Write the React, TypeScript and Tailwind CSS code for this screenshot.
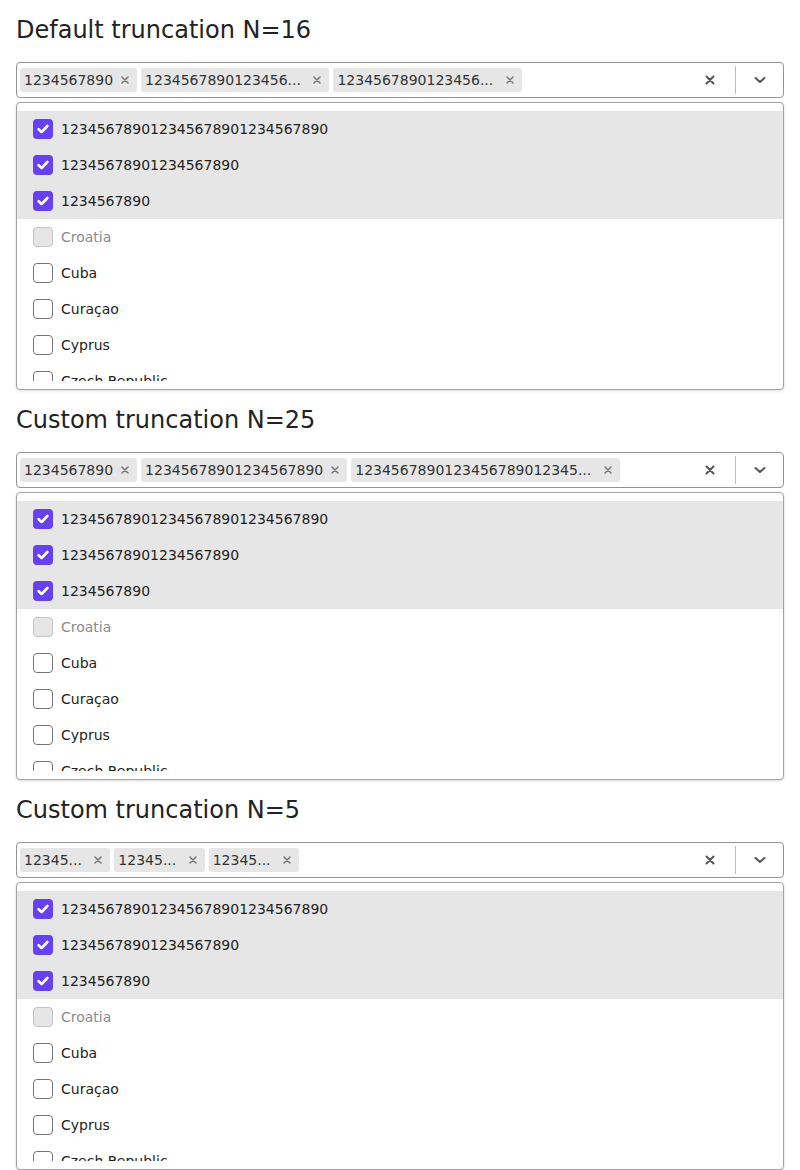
import React from 'react';

const FULL = ['123456789012345678901234567890', '12345678901234567890', '1234567890'];

const truncate = (s: string, n: number) => (s.length > n ? s.slice(0, n) + '... ' : s);

const options = [
  { label: FULL[0], checked: true },
  { label: FULL[1], checked: true },
  { label: FULL[2], checked: true },
  { label: 'Croatia', disabled: true },
  { label: 'Cuba' },
  { label: 'Curaçao' },
  { label: 'Cyprus' },
  { label: 'Czech Republic' },
  { label: 'Denmark' },
];

const Checkbox = ({ checked, disabled }: { checked?: boolean; disabled?: boolean }) => {
  if (checked) {
    return (
      <span className="w-5 h-5 rounded-[4px] bg-[#6741f0] flex items-center justify-center shrink-0">
        <svg width="14" height="14" viewBox="0 0 14 14" fill="none">
          <path d="M2.6 7.2 L5.6 10 L11.4 4" stroke="white" strokeWidth="2.6" strokeLinecap="round" strokeLinejoin="round" />
        </svg>
      </span>
    );
  }
  return (
    <span
      className={`w-5 h-5 rounded-[4px] border shrink-0 ${
        disabled ? 'bg-[#e6e6e6] border-[#c4c4c4]' : 'bg-white border-[#757575]'
      }`}
    />
  );
};

const Chip = ({ text }: { text: string }) => (
  <div className="h-6 flex items-center bg-[#e6e6e6] rounded-[3px] text-[14px] text-[#333] shrink-0">
    <span className="pl-1 whitespace-pre">{text}</span>
    <span className="w-6 h-6 flex items-center justify-center">
      <svg width="8" height="8" viewBox="0 0 8 8">
        <path d="M1 1 L7 7 M7 1 L1 7" stroke="#777" strokeWidth="1.5" strokeLinecap="round" />
      </svg>
    </span>
  </div>
);

const Section = ({ title, n }: { title: string; n: number }) => (
  <div className="pt-4">
    <h2 className="text-[24px] leading-[28px] text-[#222] mb-[18px]">{title}</h2>
    <div className="h-9 border border-[#949494] rounded-[4px] flex items-center pl-[3px] bg-white">
      <div className="flex items-center gap-1 flex-1 min-w-0 overflow-hidden">
        {[FULL[2], FULL[1], FULL[0]].map((t, i) => (
          <Chip key={i} text={truncate(t, n)} />
        ))}
      </div>
      <div className="w-9 h-full flex items-center justify-center mr-[7px]">
        <svg width="10" height="10" viewBox="0 0 10 10">
          <path d="M1.5 1.5 L8.5 8.5 M8.5 1.5 L1.5 8.5" stroke="#555" strokeWidth="2" strokeLinecap="round" />
        </svg>
      </div>
      <div className="w-px h-7 bg-[#bdbdbd]" />
      <div className="w-[47px] h-full flex items-center justify-center">
        <svg width="14" height="10" viewBox="0 0 14 10">
          <path d="M2.5 3 L7 7 L11.5 3" stroke="#555" strokeWidth="2" fill="none" strokeLinecap="round" strokeLinejoin="round" />
        </svg>
      </div>
    </div>
    <div className="mt-1 h-[288px] border border-[#a3a3a3] rounded-[4px] py-2 bg-white shadow-[0_1px_3px_rgba(0,0,0,0.15)]">
      <div className="h-[270px] overflow-hidden">
        {options.map((o, i) => (
          <div
            key={i}
            className={`h-9 flex items-center gap-2 px-4 text-[14px] ${o.checked ? 'bg-[#e6e6e6]' : ''} ${
              o.disabled ? 'text-[#8a8a8a]' : 'text-[#222]'
            }`}
          >
            <Checkbox checked={o.checked} disabled={o.disabled} />
            <span>{o.label}</span>
          </div>
        ))}
      </div>
    </div>
  </div>
);

export default function App() {
  return (
    <div className="w-[800px] h-[1170px] bg-white px-4 overflow-hidden" style={{ fontFamily: '"DejaVu Sans", sans-serif' }}>
      <Section title="Default truncation N=16" n={16} />
      <Section title="Custom truncation N=25" n={25} />
      <Section title="Custom truncation N=5" n={5} />
    </div>
  );
}
